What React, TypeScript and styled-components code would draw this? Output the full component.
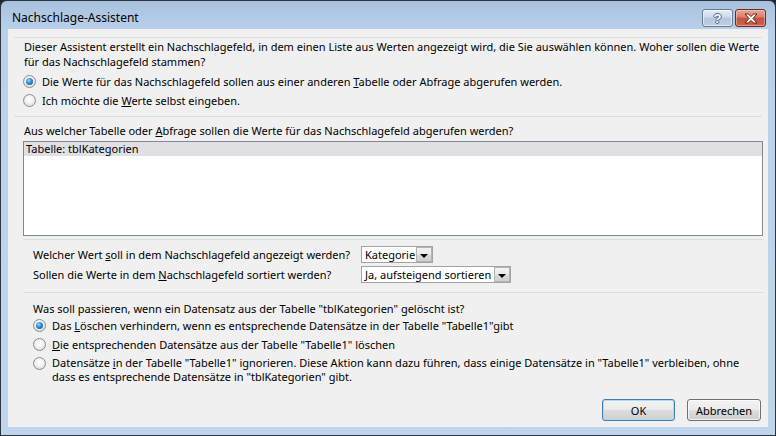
import React from 'react';
import styled, { createGlobalStyle, css } from 'styled-components';

const GlobalStyle = createGlobalStyle`
  html, body {
    margin: 0;
    padding: 0;
    background: #1f2833;
  }

  body {
    font-family: 'Noto Sans', 'Liberation Sans', sans-serif;
    font-size: 11px;
    color: #000;
  }

  * {
    box-sizing: border-box;
  }
`;

const Window = styled.div`
  width: 776px;
  height: 436px;
  display: flex;
  flex-direction: column;
  border: 1px solid #2d3743;
  border-radius: 7px 7px 0 0;
  background: linear-gradient(to bottom, #a8c1de 0px, #bad1ea 30px, #bfd5eb 100%);
  padding: 0 7px 8px 7px;
  overflow: hidden;
`;

const TitleBar = styled.div`
  height: 28px;
  flex: none;
  display: flex;
  align-items: flex-start;
  justify-content: space-between;
`;

const Title = styled.span`
  margin: 9px 0 0 4px;
  font-size: 12px;
  line-height: 16px;
`;

const CaptionButtons = styled.div`
  display: flex;
  gap: 2px;
  margin: 8px 2px 0 0;
`;

const CaptionButton = styled.div<{ $variant: 'help' | 'close' }>`
  width: 31px;
  height: 18px;
  border-radius: 3px;
  display: flex;
  align-items: center;
  justify-content: center;
  color: #fff;
  font-family: 'Liberation Sans', sans-serif;
  font-weight: bold;
  font-size: 13px;
  line-height: 1;
  ${(p) =>
    p.$variant === 'help'
      ? css`
          border: 1px solid #6a7a8f;
          background: linear-gradient(to bottom, #e4edf8 0%, #cbd9ea 45%, #b4c7de 50%, #bccee3 100%);
          box-shadow: inset 0 0 0 1px rgba(255, 255, 255, 0.55);
          text-shadow: 1px 0 0 #55657a, -1px 0 0 #55657a, 0 1px 0 #55657a, 0 -1px 0 #55657a;
        `
      : css`
          border: 1px solid #6b2a22;
          background: linear-gradient(to bottom, #e8a898 0%, #d67f6c 45%, #c4513d 50%, #cc6450 100%);
          box-shadow: inset 0 0 0 1px rgba(255, 220, 210, 0.45);
        `}
`;

const Client = styled.div`
  flex: 1;
  display: flex;
  flex-direction: column;
  background: #f0f0f0;
  padding: 8px 0 6px 0;
`;

const Rule = styled.div<{ $left: number; $right: number; $top: number }>`
  height: 1px;
  flex: none;
  margin: ${(p) => p.$top}px ${(p) => p.$right}px 0 ${(p) => p.$left}px;
  background: #d6dee6;
`;

const Text = styled.div<{ $left: number; $top: number }>`
  margin: ${(p) => p.$top}px 0 0 ${(p) => p.$left}px;
  line-height: 15px;
  white-space: nowrap;
`;

const RadioGroup = styled.div<{ $left: number; $top: number }>`
  display: flex;
  flex-direction: column;
  margin: ${(p) => p.$top}px 0 0 ${(p) => p.$left}px;
`;

const RadioRow = styled.div<{ $multi?: boolean }>`
  display: flex;
  align-items: ${(p) => (p.$multi ? 'flex-start' : 'center')};
  gap: 6px;
  min-height: 19px;
  padding-top: ${(p) => (p.$multi ? 2 : 0)}px;
`;

const RadioDot = styled.span<{ $checked?: boolean; $multi?: boolean }>`
  position: relative;
  flex: none;
  width: 13px;
  height: 13px;
  margin-top: ${(p) => (p.$multi ? 1 : 0)}px;
  border-radius: 50%;
  border: 1px solid #8a8c8e;
  background: radial-gradient(circle at 50% 40%, #ffffff 0%, #f1f1f1 45%, #d2d2d2 100%);
  ${(p) =>
    p.$checked &&
    css`
      &::after {
        content: '';
        position: absolute;
        left: 2px;
        top: 2px;
        width: 7px;
        height: 7px;
        border-radius: 50%;
        background: radial-gradient(circle at 40% 35%, #9ad9ff 0%, #2c8ad6 45%, #0c4f8e 100%);
      }
    `}
`;

const RadioLabel = styled.span<{ $multi?: boolean }>`
  line-height: ${(p) => (p.$multi ? 14 : 15)}px;
  white-space: nowrap;
`;

const ListBox = styled.div`
  height: 95px;
  margin: 3px 5px 0 15px;
  border: 1px solid #828790;
  background: #fff;
  padding: 0;
`;

const ListItem = styled.div<{ $selected?: boolean }>`
  height: 14px;
  line-height: 14px;
  padding-left: 2px;
  background: ${(p) => (p.$selected ? '#e0e0e4' : 'transparent')};
`;

const FormGrid = styled.div`
  display: grid;
  grid-template-columns: 328px auto;
  row-gap: 3px;
  align-items: center;
  margin: 6px 0 0 25px;
`;

const Combo = styled.div<{ $width: number }>`
  width: ${(p) => p.$width}px;
  height: 17px;
  display: flex;
  align-items: center;
  border: 1px solid #a3a3a3;
  background: #fff;
`;

const ComboText = styled.span`
  flex: 1;
  padding-left: 3px;
  line-height: 15px;
  white-space: nowrap;
  overflow: hidden;
`;

const DropButton = styled.span`
  flex: none;
  width: 16px;
  height: 15px;
  display: flex;
  align-items: center;
  justify-content: center;
  border: 1px solid #b4b4b4;
  background: linear-gradient(to bottom, #f4f4f4 0%, #e8e8e8 50%, #dadada 51%, #d0d0d0 100%);

  &::after {
    content: '';
    margin-top: 2px;
    border-left: 4px solid transparent;
    border-right: 4px solid transparent;
    border-top: 4px solid #000;
  }
`;

const ButtonBar = styled.div`
  margin: auto 7px 0 0;
  display: flex;
  justify-content: flex-end;
  gap: 12px;
`;

const Button = styled.div<{ $width: number; $default?: boolean }>`
  width: ${(p) => p.$width}px;
  height: 22px;
  display: flex;
  align-items: center;
  justify-content: center;
  font-size: 11px;
  border-radius: 3px;
  border: 1px solid ${(p) => (p.$default ? '#3c7fb1' : '#707070')};
  background: linear-gradient(to bottom, #f2f2f2 0%, #ebebeb 50%, #dddddd 51%, #cfcfcf 100%);
  box-shadow: ${(p) =>
    p.$default ? 'inset 0 0 0 1px #a9dcf6' : 'inset 0 0 0 1px rgba(255,255,255,0.7)'};
`;

const CloseGlyph = () => (
  <svg width="14" height="11" viewBox="0 0 14 11">
    <path
      d="M1 1 H4.5 L7 3.6 L9.5 1 H13 L9 5.5 L13 10 H9.5 L7 7.4 L4.5 10 H1 L5 5.5 Z"
      fill="#fff"
      stroke="#5a1f17"
      strokeWidth="1"
      strokeLinejoin="round"
    />
  </svg>
);

const App: React.FC = () => (
  <>
    <GlobalStyle />
    <Window>
      <TitleBar>
        <Title>Nachschlage-Assistent</Title>
        <CaptionButtons>
          <CaptionButton $variant="help">?</CaptionButton>
          <CaptionButton $variant="close">
            <CloseGlyph />
          </CaptionButton>
        </CaptionButtons>
      </TitleBar>
      <Client>
        <Rule $left={6} $right={6} $top={0} />
        <Text $left={16} $top={1}>
          Dieser Assistent erstellt ein Nachschlagefeld, in dem einen Liste aus Werten angezeigt
          wird, die Sie auswählen können. Woher sollen die Werte
          <br />
          für das Nachschlagefeld stammen?
        </Text>
        <RadioGroup $left={15} $top={3}>
          <RadioRow>
            <RadioDot $checked />
            <RadioLabel>
              Die Werte für das Nachschlagefeld sollen aus einer anderen <u>T</u>abelle oder
              Abfrage abgerufen werden.
            </RadioLabel>
          </RadioRow>
          <RadioRow>
            <RadioDot />
            <RadioLabel>
              Ich möchte die <u>W</u>erte selbst eingeben.
            </RadioLabel>
          </RadioRow>
        </RadioGroup>
        <Rule $left={6} $right={6} $top={6} />
        <Text $left={16} $top={6}>
          Aus welcher Tabelle oder <u>A</u>bfrage sollen die Werte für das Nachschlagefeld
          abgerufen werden?
        </Text>
        <ListBox>
          <ListItem $selected>Tabelle: tblKategorien</ListItem>
        </ListBox>
        <Rule $left={15} $right={5} $top={3} />
        <FormGrid>
          <span>
            Welcher Wert <u>s</u>oll in dem Nachschlagefeld angezeigt werden?
          </span>
          <Combo $width={72}>
            <ComboText>Kategorie</ComboText>
            <DropButton />
          </Combo>
          <span>
            Sollen die Werte in dem <u>N</u>achschlagefeld sortiert werden?
          </span>
          <Combo $width={150}>
            <ComboText>Ja, aufsteigend sortieren</ComboText>
            <DropButton />
          </Combo>
        </FormGrid>
        <Rule $left={15} $right={5} $top={9} />
        <Text $left={25} $top={8}>
          Was soll passieren, wenn ein Datensatz aus der Tabelle "tblKategorien" gelöscht ist?
        </Text>
        <RadioGroup $left={25} $top={0}>
          <RadioRow>
            <RadioDot $checked />
            <RadioLabel>
              Das <u>L</u>öschen verhindern, wenn es entsprechende Datensätze in der Tabelle
              "Tabelle1"gibt
            </RadioLabel>
          </RadioRow>
          <RadioRow>
            <RadioDot />
            <RadioLabel>
              <u>D</u>ie entsprechenden Datensätze aus der Tabelle "Tabelle1" löschen
            </RadioLabel>
          </RadioRow>
          <RadioRow $multi>
            <RadioDot $multi />
            <RadioLabel $multi>
              Datensätze <u>i</u>n der Tabelle "Tabelle1" ignorieren. Diese Aktion kann dazu
              führen, dass einige Datensätze in "Tabelle1" verbleiben, ohne
              <br />
              dass es entsprechende Datensätze in "tblKategorien" gibt.
            </RadioLabel>
          </RadioRow>
        </RadioGroup>
        <ButtonBar>
          <Button $width={73} $default>
            OK
          </Button>
          <Button $width={74}>Abbrechen</Button>
        </ButtonBar>
      </Client>
    </Window>
  </>
);

export default App;
